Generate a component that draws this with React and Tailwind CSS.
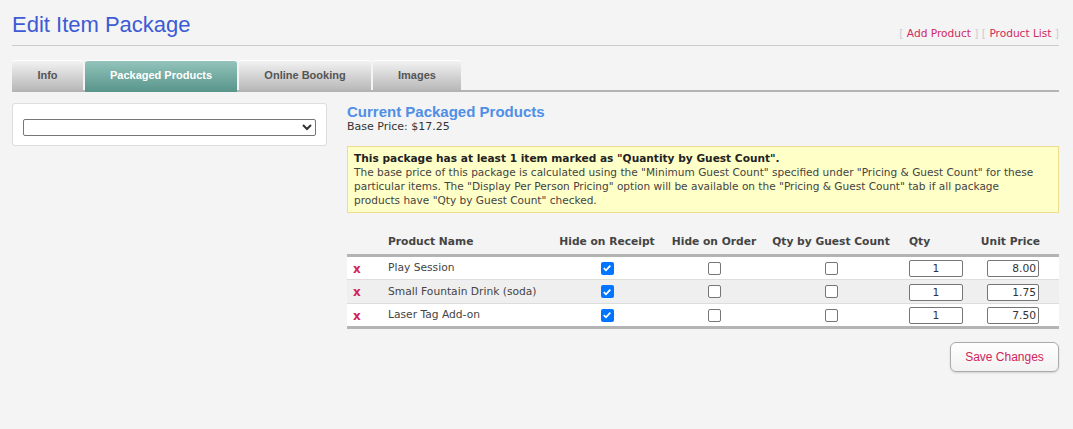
import React from 'react';

const rows = [
  { name: 'Play Session', receipt: true, order: false, guest: false, qty: '1', price: '8.00' },
  { name: 'Small Fountain Drink (soda)', receipt: true, order: false, guest: false, qty: '1', price: '1.75' },
  { name: 'Laser Tag Add-on', receipt: true, order: false, guest: false, qty: '1', price: '7.50' },
];

const tabs = [
  { label: 'Info', w: 'w-[71px]' },
  { label: 'Packaged Products', w: 'w-[152px]', active: true },
  { label: 'Online Booking', w: 'w-[132px]' },
  { label: 'Images', w: 'w-[88px]' },
];

const Check = ({ on }) =>
  on ? (
    <span className="inline-flex w-[13px] h-[13px] rounded-[2px] bg-[#0075ff] items-center justify-center align-middle">
      <svg width="10" height="10" viewBox="0 0 10 10">
        <path d="M1.8 5.2 L4 7.3 L8.3 2.6" fill="none" stroke="white" strokeWidth="1.8" />
      </svg>
    </span>
  ) : (
    <span className="inline-block w-[13px] h-[13px] rounded-[2px] border border-[#767676] bg-white align-middle" />
  );

const App = () => {
  return (
    <div className="min-h-[429px] bg-[#f4f4f4] pl-3 pr-[14px] text-[#333] font-['DejaVu_Sans',Verdana,sans-serif]">
      <div className="flex items-end justify-between pt-[11px] pb-[6px] border-b border-[#cccccc]">
        <h1 className="font-['Liberation_Sans',Arial,sans-serif] text-[22px] leading-[28px] text-[#3d5bd4]">
          Edit Item Package
        </h1>
        <div className="text-[10.6px] leading-[11px] text-[#d02a5e]">
          <span className="text-[#c8ccd8]">[ </span>Add Product<span className="text-[#c8ccd8]"> ]</span>{' '}
          <span className="text-[#c8ccd8]">[ </span>Product List<span className="text-[#c8ccd8]"> ]</span>
        </div>
      </div>

      <div className="flex gap-[2px] mt-[14px] border-b-2 border-[#b4b4b4] font-['Liberation_Sans',Arial,sans-serif]">
        {tabs.map((t) => (
          <div
            key={t.label}
            className={`${t.w} h-[32px] -mb-[2px] rounded-t-[3px] flex items-center justify-center text-[11px] font-bold border-t border-white ${
              t.active
                ? 'bg-gradient-to-b from-[#93c4bb] to-[#5b978d] text-white border-b-2 border-b-[#5b978d]'
                : 'bg-gradient-to-b from-[#f2f2f2] to-[#b9b9b9] text-[#555] border-b-2 border-b-[#b4b4b4]'
            }`}
          >
            {t.label}
          </div>
        ))}
      </div>

      <div className="flex gap-5 mt-[11px]">
        <div className="w-[315px] h-[43px] shrink-0 bg-white border border-[#dddddd] rounded-[3px] px-[10px] pt-[10px]">
          <select className="w-full h-[17px] border border-[#767676] rounded-[2px] bg-white text-[11px]">
            <option></option>
          </select>
        </div>

        <div className="flex-1">
          <div className="font-['Liberation_Sans',Arial,sans-serif] font-bold text-[15px] leading-[17px] text-[#4f8fe6]">
            Current Packaged Products
          </div>
          <div className="text-[11px] leading-[14px]">Base Price: $17.25</div>

          <div className="mt-[12px] bg-[#ffffc8] border border-[#f0dc8e] pl-[6px] pr-[14px] pt-[4px] pb-[5px] leading-[14px]">
            <div className="font-bold text-[10.6px] text-[#222]">
              This package has at least 1 item marked as "Quantity by Guest Count".
            </div>
            <div className="text-[10.55px] text-[#444]">
              The base price of this package is calculated using the "Minimum Guest Count" specified under "Pricing &amp;
              Guest Count" for these particular items. The "Display Per Person Pricing" option will be available on the
              "Pricing &amp; Guest Count" tab if all package products have "Qty by Guest Count" checked.
            </div>
          </div>

          <table className="w-full table-fixed mt-[17px] text-[10.7px] border-collapse">
            <thead>
              <tr className="h-[25px] border-b-[3px] border-[#b4b4b4] text-[#444]">
                <th className="w-[34px]"></th>
                <th className="w-[174px] text-left font-bold pl-[7px]">Product Name</th>
                <th className="w-[104px] text-center font-bold">Hide on Receipt</th>
                <th className="w-[110px] text-center font-bold">Hide on Order</th>
                <th className="w-[124px] text-center font-bold">Qty by Guest Count</th>
                <th className="w-[85px] text-left font-bold pl-[16px]">Qty</th>
                <th className="w-[81px] text-right font-bold pr-[19px]">Unit Price</th>
              </tr>
            </thead>
            <tbody>
              {rows.map((r, i) => (
                <tr
                  key={r.name}
                  className={`h-[24px] ${i % 2 ? 'bg-[#efefef]' : 'bg-white'} ${
                    i < rows.length - 1 ? 'border-b border-[#dddddd]' : 'border-b-[3px] border-[#b4b4b4]'
                  }`}
                >
                  <td className="pl-[6px] pt-[2px] text-[#d0245c] font-bold text-[12px]">x</td>
                  <td className="pl-[7px] pt-[2px] text-[#444] whitespace-nowrap">{r.name}</td>
                  <td className="text-center pt-[2px]"><Check on={r.receipt} /></td>
                  <td className="text-center pt-[2px]"><Check on={r.order} /></td>
                  <td className="text-center pt-[2px]"><Check on={r.guest} /></td>
                  <td className="pl-[16px] pt-[2px]">
                    <input
                      readOnly
                      value={r.qty}
                      className="block w-[54px] h-[17px] border border-[#767676] rounded-[2px] bg-white text-center text-[10.7px]"
                    />
                  </td>
                  <td className="pr-[20px] pt-[2px]">
                    <input
                      readOnly
                      value={r.price}
                      className="block ml-auto w-[52px] h-[17px] border border-[#767676] rounded-[2px] bg-white text-right pr-[2px] text-[10.7px]"
                    />
                  </td>
                </tr>
              ))}
            </tbody>
          </table>

          <div className="flex justify-end mt-[13px]">
            <button className="w-[109px] h-[30px] rounded-[6px] border border-[#aaaaaa] bg-gradient-to-b from-white to-[#f2f2f2] text-[#d0245c] font-['Liberation_Sans',Arial,sans-serif] text-[12px] shadow-[0_1px_2px_rgba(0,0,0,0.15)]">
              Save Changes
            </button>
          </div>
        </div>
      </div>
    </div>
  );
};

export default App;
